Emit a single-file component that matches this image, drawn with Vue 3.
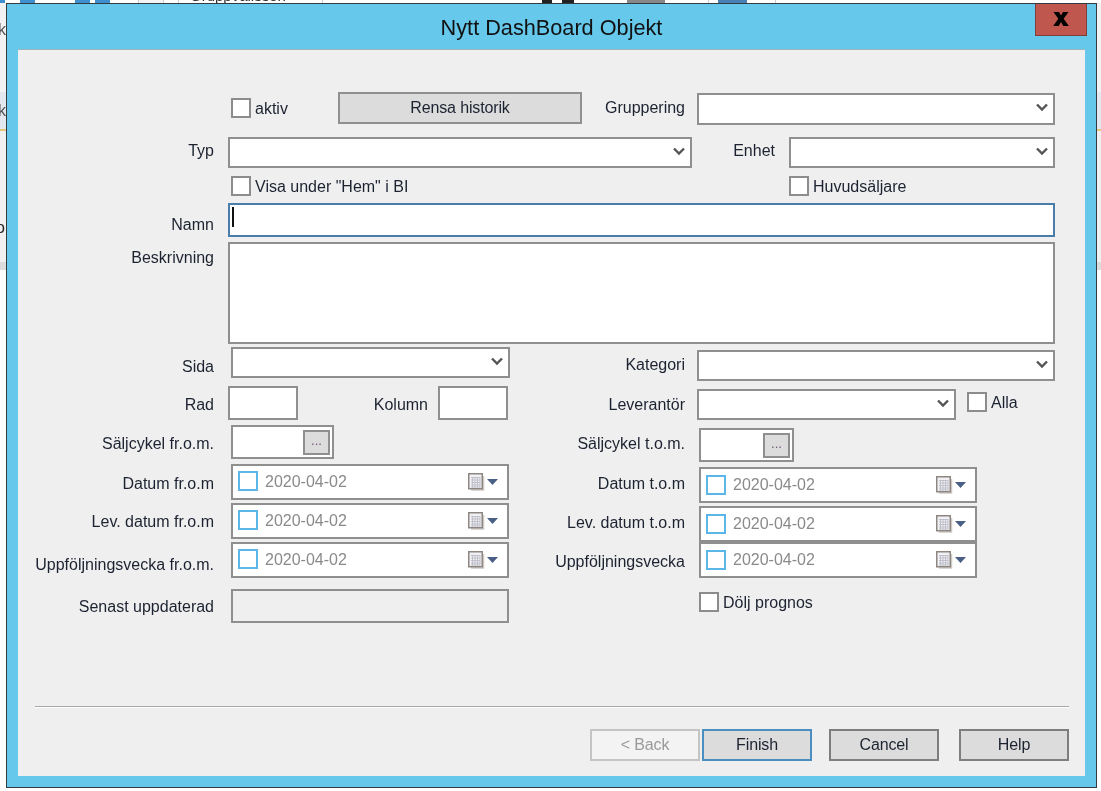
<script setup>
const leftDates = ['Datum fr.o.m', 'Lev. datum fr.o.m', 'Uppföljningsvecka fr.o.m.']
const rightDates = ['Datum t.o.m', 'Lev. datum t.o.m', 'Uppföljningsvecka']
</script>

<template>
  <div class="desktop">
    <div class="backdrop">
      <div class="bg-top"><span class="bg-grp">Gruppvalissen</span></div>
      <div class="band b1"><span class="bg-k">k</span></div>
      <div class="band b2"><span class="bg-k">k</span></div>
      <div class="band b3"></div>
      <div class="band b4"><span class="bg-o">o</span></div>
      <div class="band b5"></div>
    </div>

    <div class="window">
      <div class="titlebar">
        <div class="title">Nytt DashBoard Objekt</div>
        <button class="close">
          <svg width="16" height="14" viewBox="0 0 16 14"><path d="M0.500 0h5.500L8 3.500 10 0h5.500L10.700 6.800 15.800 14h-5.500L8 10 5.700 14H0.200l5.100-7.200z" fill="#000"/></svg>
        </button>
      </div>

      <div class="panel">
        <div class="form">
          <div class="row r1">
            <label class="check c-aktiv"><i class="box"></i>aktiv</label>
            <button class="btn rensa">Rensa historik</button>
            <span class="lab lab-grp">Gruppering</span>
            <div class="combo w-grp"><svg class="chev" width="12" height="9" viewBox="0 0 12 9"><path d="M1 1.500l5 5 5-5" fill="none" stroke="#555" stroke-width="2.400"/></svg></div>
          </div>
          <div class="row r2">
            <span class="lab lab-left lab-typ">Typ</span>
            <div class="combo w-typ"><svg class="chev" width="12" height="9" viewBox="0 0 12 9"><path d="M1 1.500l5 5 5-5" fill="none" stroke="#555" stroke-width="2.400"/></svg></div>
            <span class="lab lab-enhet">Enhet</span>
            <div class="combo w-enh"><svg class="chev" width="12" height="9" viewBox="0 0 12 9"><path d="M1 1.500l5 5 5-5" fill="none" stroke="#555" stroke-width="2.400"/></svg></div>
          </div>
          <div class="row r3">
            <label class="check c-visa"><i class="box"></i>Visa under "Hem" i BI</label>
            <label class="check c-huvud"><i class="box"></i>Huvudsäljare</label>
          </div>
          <div class="row r4">
            <span class="lab lab-left namn">Namn</span>
            <div class="input focus"><i class="caret"></i></div>
          </div>
          <div class="row r5">
            <span class="lab lab-left besk">Beskrivning</span>
            <div class="input area"></div>
          </div>

          <div class="lower">
            <div class="col col-left">
              <div class="row step">
                <span class="lab lab-left sida">Sida</span>
                <div class="combo w-sida"><svg class="chev" width="12" height="9" viewBox="0 0 12 9"><path d="M1 1.500l5 5 5-5" fill="none" stroke="#555" stroke-width="2.400"/></svg></div>
              </div>
              <div class="row step">
                <span class="lab lab-left rad">Rad</span>
                <div class="input w-rad"></div>
                <span class="lab lab-kol">Kolumn</span>
                <div class="input w-kol"></div>
              </div>
              <div class="row step">
                <span class="lab lab-left cyc">Säljcykel fr.o.m.</span>
                <div class="cycle cyc-l"><span class="dots">...</span></div>
              </div>
              <div v-for="(text, i) in leftDates" :key="text" class="row step">
                <span class="lab lab-left" :class="'dl' + i">{{ text }}</span>
                <div class="date date-l">
                  <i class="dbox"></i><span class="dtext">2020-04-02</span>
                  <svg class="cal" width="17" height="18" viewBox="0 0 17 18">
                    <path d="M15.500 3v14H3" fill="none" stroke="#cfcac7" stroke-width="1.500"/>
                    <rect x="0.750" y="0.750" width="13.500" height="15" fill="#f1f1f5" stroke="#8e8681" stroke-width="1.500"/>
                    <path d="M3 4.500h9M3 7h9M3 9.500h9M3 12h9M3 14h9M4.500 4v10.500M7 4v10.500M9.500 4v10.500M12 4v10.500" stroke="#bfbfca" stroke-width="1"/>
                  </svg>
                  <svg class="tri" width="11" height="6" viewBox="0 0 11 6"><path d="M0 0h11L5.500 6z" fill="#4a5f86"/></svg>
                </div>
              </div>
              <div class="row last">
                <span class="lab lab-left senast">Senast uppdaterad</span>
                <div class="input disabled"></div>
              </div>
            </div>

            <div class="col col-right">
              <div class="row step kat-row">
                <span class="lab lab-right kat">Kategori</span>
                <div class="combo w-kat"><svg class="chev" width="12" height="9" viewBox="0 0 12 9"><path d="M1 1.500l5 5 5-5" fill="none" stroke="#555" stroke-width="2.400"/></svg></div>
              </div>
              <div class="row step">
                <span class="lab lab-right lev">Leverantör</span>
                <div class="combo w-lev"><svg class="chev" width="12" height="9" viewBox="0 0 12 9"><path d="M1 1.500l5 5 5-5" fill="none" stroke="#555" stroke-width="2.400"/></svg></div>
                <label class="check c-alla"><i class="box"></i>Alla</label>
              </div>
              <div class="row step">
                <span class="lab lab-right cyc2">Säljcykel t.o.m.</span>
                <div class="cycle cyc-r"><span class="dots">...</span></div>
              </div>
              <div v-for="(text, i) in rightDates" :key="text" class="row" :class="i === 0 ? 'step' : 'tight'">
                <span class="lab lab-right" :class="'dr' + i">{{ text }}</span>
                <div class="date date-r">
                  <i class="dbox"></i><span class="dtext">2020-04-02</span>
                  <svg class="cal" width="17" height="18" viewBox="0 0 17 18">
                    <path d="M15.500 3v14H3" fill="none" stroke="#cfcac7" stroke-width="1.500"/>
                    <rect x="0.750" y="0.750" width="13.500" height="15" fill="#f1f1f5" stroke="#8e8681" stroke-width="1.500"/>
                    <path d="M3 4.500h9M3 7h9M3 9.500h9M3 12h9M3 14h9M4.500 4v10.500M7 4v10.500M9.500 4v10.500M12 4v10.500" stroke="#bfbfca" stroke-width="1"/>
                  </svg>
                  <svg class="tri" width="11" height="6" viewBox="0 0 11 6"><path d="M0 0h11L5.500 6z" fill="#4a5f86"/></svg>
                </div>
              </div>
              <label class="check c-dolj"><i class="box"></i>Dölj prognos</label>
            </div>
          </div>
        </div>

        <div class="footer">
          <div class="sep"></div>
          <div class="buttons">
            <button class="wbtn back">&lt; Back</button>
            <button class="wbtn finish">Finish</button>
            <button class="wbtn cancel">Cancel</button>
            <button class="wbtn help">Help</button>
          </div>
        </div>
      </div>
    </div>
  </div>
</template>

<style>
html, body { margin: 0; padding: 0; overflow: hidden; background: #fff; }
</style>

<style scoped>
.desktop {
  position: relative;
  width: 1101px;
  height: 791px;
  overflow: hidden;
  font-family: "Liberation Sans", Arial, sans-serif;
  font-size: 16px;
  color: #1c2230;
  filter: blur(0.3px);
}

/* window behind the dialog */
.backdrop { position: absolute; inset: 0; display: flex; flex-direction: column; }
.bg-top {
  position: relative;
  height: 3px;
  overflow: hidden;
  background: linear-gradient(90deg,
    #3d8fd0 0 5px, #fff 5px 20px, #3d8fd0 20px 35px, #fff 35px 75px,
    #3d8fd0 75px 90px, #fff 90px 95px, #3d8fd0 95px 110px, #fff 110px 138px,
    #ccc 138px 139px, #f4f4f4 139px 163px, #ccc 163px 164px, #fff 164px 178px,
    #ccc 178px 179px, #fff 179px 322px, #ccc 322px 323px, #fff 323px 542px,
    #222 542px 552px, #fff 552px 562px, #222 562px 574px, #fff 574px 627px,
    #888 627px 665px, #fff 665px 708px, #ccc 708px 709px, #fff 709px 718px,
    #4a7fb5 718px 747px, #fff 747px 775px, #ccc 775px 776px, #fff 776px);
}
.bg-grp { position: absolute; left: 190px; top: -12px; color: #333; font-size: 15px; line-height: 15px; }
.band { position: relative; flex: none; }
.b1 { height: 89px; background: #f2f2f2; }
.b2 { height: 37px; background: #e3e7ee; }
.b3 { height: 2px; background: #e6c77c; }
.b4 { height: 131px; background: #f0f0f0; }
.b5 { height: 8px; background: #dcdcdc; }
.bg-k { position: absolute; left: -2px; top: 18px; color: #555; line-height: 18px; }
.b2 .bg-k { top: 10px; }
.bg-o { position: absolute; left: -4px; top: 88px; color: #222; line-height: 18px; }

/* dialog */
.window {
  position: absolute;
  left: 6px;
  top: 3px;
  width: 1089px;
  height: 783px;
  border: 1px solid #333a40;
  background: #66c8eb;
  display: flex;
  flex-direction: column;
}
.titlebar { position: relative; height: 45px; flex: none; }
.title {
  text-align: center;
  font-size: 21.700px;
  color: #111;
  padding-top: 12px;
  line-height: 24px;
}
.close {
  position: absolute;
  right: 9px;
  top: 0;
  width: 52px;
  height: 32px;
  padding: 0 0 2px;
  box-sizing: border-box;
  background: #c0574f;
  border: 1px solid #7f3f3a;
  border-top: 0;
  display: flex;
  align-items: center;
  justify-content: center;
}
.panel {
  margin-left: 11px;
  width: 1067px;
  height: 727px;
  background: #efefef;
  border-top: 1px solid #9fb4bd;
  box-sizing: border-box;
  display: flex;
  flex-direction: column;
}
.form { flex: 1; padding-top: 42px; }
.row { display: flex; align-items: flex-start; }
.lab { flex: none; white-space: nowrap; text-align: right; line-height: 20px; }
.lab-left { width: 196px; }
.lab-right { width: 170px; }

.check { display: flex; align-items: flex-start; white-space: nowrap; flex: none; line-height: 22px; height: 20px; }
.box {
  width: 20px; height: 20px; flex: none;
  box-sizing: border-box;
  background: #fff;
  border: 2px solid #8c8c8c;
  margin-right: 4px;
}
.combo, .input, .cycle, .date {
  position: relative;
  flex: none;
  box-sizing: border-box;
  background: #fff;
  border: 2px solid #8f8f8f;
}
.combo { height: 31px; }
.chev { position: absolute; right: 5px; top: 8px; }

.btn {
  box-sizing: border-box;
  background: #dcdcdc;
  border: 2px solid #8f8f8f;
  font: inherit;
  color: inherit;
  letter-spacing: -0.150px;
  padding: 0;
}

/* upper rows */
.r1 { height: 45px; }
.c-aktiv { margin-left: 213px; margin-top: 6px; width: 107px; }
.rensa { width: 244px; height: 32px; }
.lab-grp { width: 103px; margin-top: 6px; }
.w-grp { width: 358px; height: 32px; margin: 1px 0 0 12px; }

.r2 { height: 39px; }
.lab-typ { margin-top: 4px; }
.w-typ { width: 464px; margin-left: 14px; }
.lab-enhet { width: 83px; margin-top: 4px; }
.w-enh { width: 266px; margin-left: 14px; }

.r3 { height: 27px; }
.c-visa { margin-left: 213px; width: 558px; }

.r4 { height: 39px; }
.namn { margin-top: 12px; }
.input.focus { width: 827px; height: 34px; margin-left: 14px; border-color: #4a7ea8; }
.caret { position: absolute; left: 2px; top: 2px; width: 2px; height: 20px; background: #111; }

.r5 { height: 105px; }
.besk { margin-top: 6px; }
.input.area { width: 827px; height: 102px; margin-left: 14px; }

/* lower part: the two columns step independently */
.lower { display: flex; align-items: flex-start; }
.col { display: flex; flex-direction: column; flex: none; }
.col-left { width: 497px; }
.col-right { width: 500px; padding-top: 3px; }
.step { height: 39px; }
.tight { height: 36px; }

.sida { margin-top: 10px; }
.w-sida { width: 279px; margin-left: 17px; }
.rad { margin-top: 9px; }
.w-rad { width: 70px; height: 34px; margin-left: 14px; }
.lab-kol { width: 130px; margin-top: 9px; }
.w-kol { width: 70px; height: 34px; margin-left: 10px; }
.cyc { margin-top: 9px; }
.cycle { height: 34px; }
.cyc-l { width: 103px; margin-left: 17px; }
.dots {
  position: absolute; right: 2px; top: 3px;
  width: 27px; height: 25px; box-sizing: border-box;
  background: #dcdcdc; border: 2px solid #8f8f8f;
  text-align: center; font-size: 13px; line-height: 17px; color: #6e5a78;
}
.date { width: 278px; height: 36px; }
.date-l { margin-left: 17px; }
.date-r { margin-left: 14px; }
.dl0 { margin-top: 10px; }
.dl1 { margin-top: 9px; }
.dl2 { margin-top: 13px; }
.dbox {
  position: absolute; left: 5px; top: 5px;
  width: 20px; height: 20px; box-sizing: border-box;
  border: 2px solid #5cb6e8;
  background: #fff;
}
.date-r .dbox { top: 6px; }
.dtext { position: absolute; left: 32px; top: 5px; color: #8a8a8a; line-height: 22px; }
.cal { position: absolute; right: 22px; top: 7px; }
.tri { position: absolute; right: 9px; top: 13px; }
.last { margin-top: 8px; }
.senast { margin-top: 8px; }
.input.disabled { width: 278px; height: 34px; margin-left: 17px; background: #efefef; }

.kat { margin-top: 5px; }
.w-kat { width: 358px; margin-left: 12px; }
.lev { margin-top: 6px; }
.w-lev { width: 259px; margin-left: 12px; }
.c-alla { margin: 3px 0 0 11px; }
.cyc2 { margin-top: 6px; }
.cyc-r { width: 95px; margin-left: 14px; }
.dr0 { margin-top: 7px; }
.dr1 { margin-top: 7px; }
.dr2 { margin-top: 10px; }
.c-dolj { margin: 14px 0 0 184px; }

/* footer */
.footer { flex: none; padding: 0 16px 0 17px; }
.sep { height: 1px; background: #a8a8a8; border-bottom: 1px solid #fff; margin-bottom: 21px; }
.buttons { display: flex; justify-content: flex-end; padding-bottom: 14px; height: 33px; }
.wbtn {
  box-sizing: border-box;
  width: 110px; height: 32px;
  padding: 0;
  font: inherit;
  color: inherit;
  letter-spacing: -0.150px;
  background: #dcdcdc;
  border: 2px solid #7e7e7e;
}
.back { background: #f3f3f3; border-color: #c4c4c4; color: #9a9a9a; margin-right: 2px; }
.finish { border-color: #4a8fc0; margin-right: 17px; }
.cancel { margin-right: 20px; }
</style>
